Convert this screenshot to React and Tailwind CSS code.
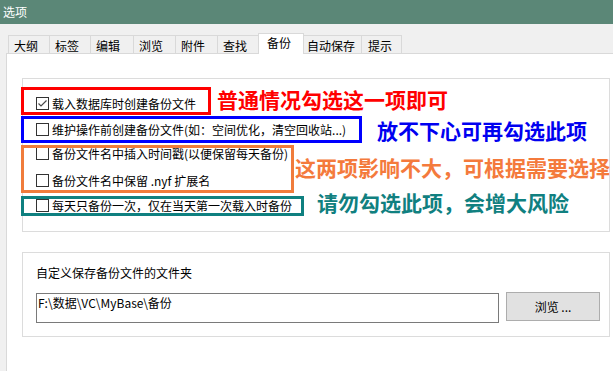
import React from "react";

const FONT = { fontFamily: "'Noto Sans CJK SC', 'Noto Sans', sans-serif" };

const tabs = [
  { t: "大纲", w: "w-[41px]", cls: "border-l pl-[5px]" },
  { t: "标签", w: "w-[41px]", cls: "border-l pl-[5px]" },
  { t: "编辑", w: "w-[43px]", cls: "border-l pl-[5px]" },
  { t: "浏览", w: "w-[42px]", cls: "border-l pl-[5px]" },
  { t: "附件", w: "w-[42px]", cls: "border-l pl-[5px]" },
  { t: "查找", w: "w-[41px]", cls: "border-l pl-[5px]" },
  { t: "备份", w: "w-[46px]", sel: true },
  { t: "自动保存", w: "w-[57px]", cls: "pl-[3px]" },
  { t: "提示", w: "w-[41px]", cls: "border-l border-r pl-[6px]" },
];

function Check({ checked }) {
  return (
    <div className="w-[13px] h-[13px] border border-[#333333] bg-white shrink-0">
      {checked && (
        <svg width="11" height="11" viewBox="0 0 11 11" className="block">
          <path d="M1.5 5.5 L4 8 L9.5 2.5" fill="none" stroke="#4a4a4a" strokeWidth="1.2" />
        </svg>
      )}
    </div>
  );
}

function Row({ checked, mt, children }) {
  return (
    <div className={`flex items-center h-[13px] ${mt}`}>
      <Check checked={checked} />
      <span className="ml-[3px] text-[12px] leading-[13px] whitespace-nowrap text-black">{children}</span>
    </div>
  );
}

export default function App() {
  return (
    <div className="w-[613px] h-[371px] overflow-hidden bg-[#f0f0f0] flex flex-col" style={FONT}>
      <div className="h-[24px] shrink-0 bg-[#5b8777] text-white text-[12px] leading-[24px] pl-[3px]">选项</div>

      <div className="relative z-10 flex items-end pl-[8px] mt-[9px] h-[20px] shrink-0">
        {tabs.map((tb) =>
          tb.sel ? (
            <div
              key={tb.t}
              className={`${tb.w} h-[21px] -mb-px bg-white border-l border-t border-r border-[#d9d9d9] pl-[8px] pt-[1px] text-[12px] leading-[16px] text-black`}
            >
              {tb.t}
            </div>
          ) : (
            <div
              key={tb.t}
              className={`${tb.w} h-[18px] bg-[#f0f0f0] border-t border-[#d9d9d9] ${tb.cls} pt-[2px] text-[12px] leading-[16px] text-black whitespace-nowrap`}
            >
              {tb.t}
            </div>
          )
        )}
      </div>

      <div className="ml-[6px] flex-1 bg-white border-l border-t border-[#d9d9d9] pl-[15px] pt-[24px]">
        <div className="relative w-[588px] h-[154px] border border-[#dcdcdc] pl-[13px] flex flex-col">
          <Row checked mt="mt-[18px]">载入数据库时创建备份文件</Row>
          <Row mt="mt-[13px]">维护操作前创建备份文件(如：空间优化，清空回收站...)</Row>
          <Row mt="mt-[11px]">备份文件名中插入时间戳(以便保留每天备份)</Row>
          <Row mt="mt-[14px]">备份文件名中保留 .nyf 扩展名</Row>
          <Row mt="mt-[12px]">每天只备份一次，仅在当天第一次载入时备份</Row>

          <div className="absolute left-[-2px] top-[8px] w-[190px] h-[28px] border-[3px] border-[#ff0000]" />
          <div className="absolute left-[-2px] top-[37px] w-[341px] h-[27px] border-[3px] border-[#0000ff]" />
          <div className="absolute left-[-2px] top-[66px] w-[273px] h-[48px] border-[3px] border-[#f07c3c]" />
          <div className="absolute left-[-2px] top-[117px] w-[283px] h-[20px] border-[3px] border-[#0f8080]" />

          <div className="absolute left-[194px] top-[10px] text-[21px] leading-[21px] font-bold text-[#ff0000] whitespace-nowrap">
            普通情况勾选这一项即可
          </div>
          <div className="absolute left-[354px] top-[41px] text-[21px] leading-[21px] font-bold text-[#0000f0] whitespace-nowrap">
            放不下心可再勾选此项
          </div>
          <div className="absolute left-[272px] top-[78px] text-[21px] leading-[21px] font-bold text-[#f47a3c] whitespace-nowrap">
            这两项影响不大，可根据需要选择
          </div>
          <div className="absolute left-[294px] top-[113px] text-[21px] leading-[21px] font-bold text-[#108080] whitespace-nowrap">
            请勿勾选此项，会增大风险
          </div>
        </div>

        <div className="mt-[20px] w-[588px] h-[85px] border border-[#dcdcdc] pl-[13px] pt-[13px] flex flex-col">
          <div className="text-[12px] leading-[13px] text-black whitespace-nowrap">自定义保存备份文件的文件夹</div>
          <div className="flex items-start mt-[14px]">
            <div className="w-[463px] h-[30px] border border-[#7a7a7a] bg-white pl-[1px] pt-[2px] text-[12px] leading-[13px] text-black whitespace-nowrap">
              F:\数据\VC\MyBase\备份
            </div>
            <div className="ml-[7px] -mt-px w-[94px] h-[29px] bg-[#e1e1e1] border border-[#adadad] flex items-center justify-center text-[12px] text-black">
              浏览 ...
            </div>
          </div>
        </div>
      </div>
    </div>
  );
}
